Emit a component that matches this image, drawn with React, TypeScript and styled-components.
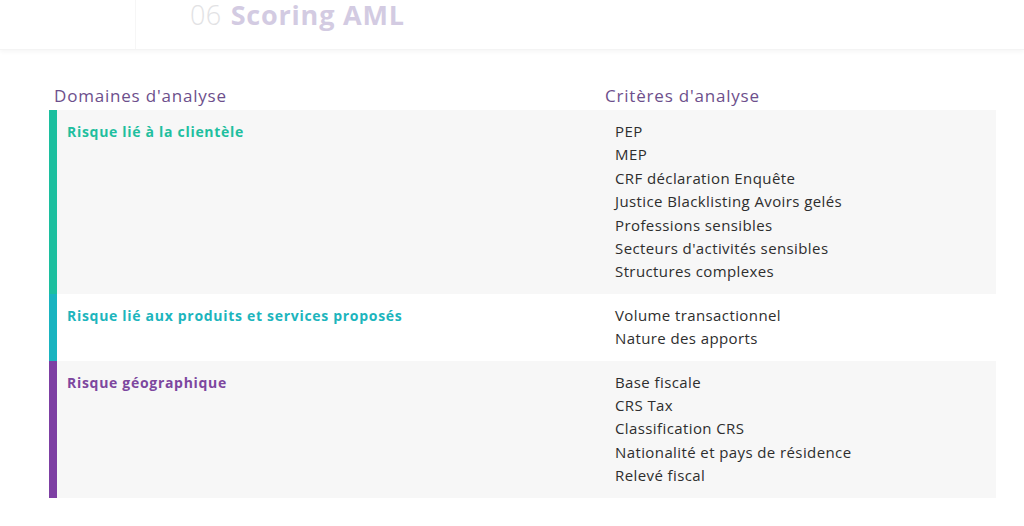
import React from 'react'
import styled, { createGlobalStyle } from 'styled-components'

type Domain = {
  label: string
  color: string
  barColor: string
  shaded: boolean
  criteria: string[]
}

const domains: Domain[] = [
  {
    label: 'Risque lié à la clientèle',
    color: '#1fbf9f',
    barColor: '#1cbf9f',
    shaded: true,
    criteria: [
      'PEP',
      'MEP',
      'CRF déclaration Enquête',
      'Justice Blacklisting Avoirs gelés',
      'Professions sensibles',
      "Secteurs d'activités sensibles",
      'Structures complexes',
    ],
  },
  {
    label: 'Risque lié aux produits et services proposés',
    color: '#1cb5bd',
    barColor: '#1ab4c0',
    shaded: false,
    criteria: ['Volume transactionnel', 'Nature des apports'],
  },
  {
    label: 'Risque géographique',
    color: '#7d479f',
    barColor: '#7d3fa3',
    shaded: true,
    criteria: [
      'Base fiscale',
      'CRS Tax',
      'Classification CRS',
      'Nationalité et pays de résidence',
      'Relevé fiscal',
    ],
  },
]

const App = () => {
  return (
    <>
      <GlobalStyle />
      <Page>
        <Header>
          <HeaderSide />
          <HeaderTitle>
            <TitleNumber>06</TitleNumber>
            <TitleText>Scoring AML</TitleText>
          </HeaderTitle>
        </Header>

        <Content>
          <ColumnHeads>
            <ColumnHead>Domaines d'analyse</ColumnHead>
            <ColumnHead>Critères d'analyse</ColumnHead>
          </ColumnHeads>

          {domains.map((d) => (
            <DomainRow key={d.label} $bar={d.barColor} $shaded={d.shaded}>
              <DomainLabel $color={d.color}>{d.label}</DomainLabel>
              <CriteriaList>
                {d.criteria.map((c) => (
                  <Criterion key={c}>{c}</Criterion>
                ))}
              </CriteriaList>
            </DomainRow>
          ))}
        </Content>
      </Page>
    </>
  )
}

export default App

const GlobalStyle = createGlobalStyle`
body {
  margin: 0;
  background: #ffffff;
  font-family: "Open Sans", "DejaVu Sans", sans-serif;
}
`

const Page = styled.div`
width: 1024px;
height: 526px;
overflow: hidden;
background: #ffffff;
`

const Header = styled.header`
height: 49px;
display: flex;
background: #ffffff;
box-shadow: 0 2px 4px rgba(0, 0, 0, 0.04);
border-bottom: 1px solid #f4f4f4;
`

const HeaderSide = styled.div`
width: 135px;
border-right: 1px solid #f6f6f6;
`

const HeaderTitle = styled.h1`
margin: 0;
padding: 0 0 0 54px;
height: 30px;
display: flex;
align-items: flex-start;
gap: 9px;
font-size: 27px;
line-height: 30px;
letter-spacing: 0.4px;
`

const TitleNumber = styled.span`
font-weight: 300;
color: #e2e2e4;
`

const TitleText = styled.span`
font-weight: 700;
color: #d3cbe2;
letter-spacing: 0.8px;
`

const Content = styled.section`
padding: 35px 0 0 49px;
width: 947px;
`

const ColumnHeads = styled.div`
display: grid;
grid-template-columns: 551px 1fr;
padding: 0 0 3px 5px;
`

const ColumnHead = styled.h2`
margin: 0;
font-size: 17px;
line-height: 22px;
font-weight: 400;
letter-spacing: 0.8px;
color: #6d4f8c;
`

const DomainRow = styled.div<{ $bar: string; $shaded: boolean }>`
display: grid;
grid-template-columns: 548px 1fr;
border-left: 8px solid ${(p) => p.$bar};
background: ${(p) => (p.$shaded ? '#f7f7f7' : '#ffffff')};
`

const DomainLabel = styled.div<{ $color: string }>`
padding: 13px 10px;
font-size: 14px;
line-height: 18px;
font-weight: 700;
letter-spacing: 0.7px;
color: ${(p) => p.$color};
`

const CriteriaList = styled.ul`
list-style: none;
margin: 0;
padding: 10px 10px 10px 10px;
`

const Criterion = styled.li`
font-size: 15px;
line-height: 23.4px;
letter-spacing: 0.4px;
color: #2e2e2e;
`
